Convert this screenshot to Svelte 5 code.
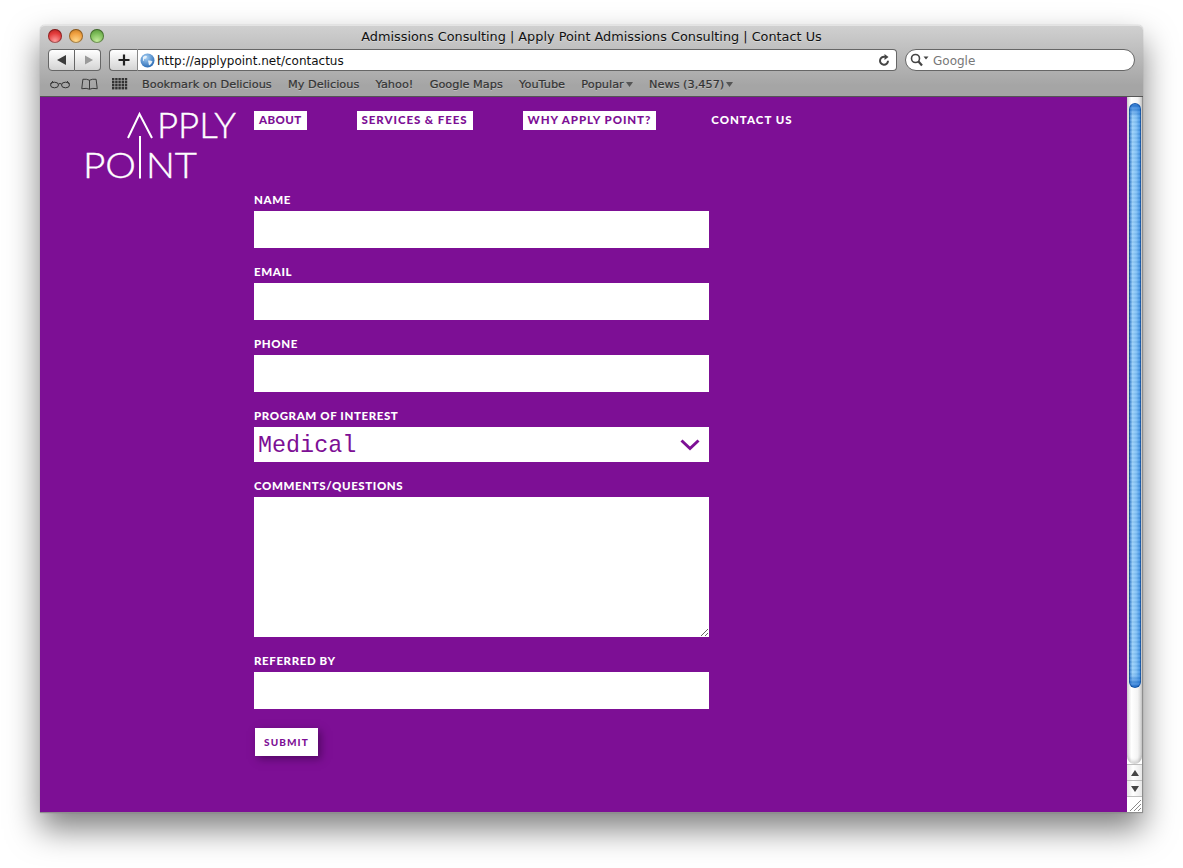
<script lang="ts">
	const bookmarks = [
		{ name: 'Bookmark on Delicious' },
		{ name: 'My Delicious' },
		{ name: 'Yahoo!' },
		{ name: 'Google Maps' },
		{ name: 'YouTube' },
		{ name: 'Popular', menu: true },
		{ name: 'News (3,457)', menu: true }
	];
	// tracking differs per item so the boxes come out the same width as the site's font
	const navItems = [
		{ name: 'ABOUT', boxed: true, tracking: 0.4 },
		{ name: 'SERVICES & FEES', boxed: true, tracking: 0.93 },
		{ name: 'WHY APPLY POINT?', boxed: true, tracking: 0.92 },
		{ name: 'CONTACT US', boxed: false, tracking: 1 }
	];
</script>

<svelte:head>
	<title>Admissions Consulting | Apply Point Admissions Consulting | Contact Us</title>
</svelte:head>

<div class="desktop">
	<div class="window">
		<header class="chrome">
			<div class="titlebar">
				<div class="lights">
					<span class="light red"></span>
					<span class="light amber"></span>
					<span class="light green"></span>
				</div>
				<div class="title">Admissions Consulting | Apply Point Admissions Consulting | Contact Us</div>
			</div>

			<div class="toolbar">
				<div class="backforward">
					<button class="tb" aria-label="Back">
						<svg width="12" height="12" viewBox="0 0 12 12"><path d="M1 6 L10 1 V11 Z" fill="#3c3c3c" /></svg>
					</button>
					<button class="tb" aria-label="Forward">
						<svg width="12" height="12" viewBox="0 0 12 12"><path d="M11 6 L3 1.5 V10.5 Z" fill="#9a9a9a" /></svg>
					</button>
				</div>
				<div class="address">
					<button class="plus" aria-label="Add bookmark">
						<svg width="12" height="12" viewBox="0 0 12 12"><path d="M6 0.5 V11.5 M0.5 6 H11.5" stroke="#222" stroke-width="2.2" /></svg>
					</button>
					<div class="urlbox">
						<svg class="globe" width="15" height="15" viewBox="0 0 15 15">
							<defs>
								<radialGradient id="g" cx="0.4" cy="0.3" r="0.8">
									<stop offset="0" stop-color="#a9d2f5" />
									<stop offset="1" stop-color="#1b5fae" />
								</radialGradient>
							</defs>
							<circle cx="7.5" cy="7.5" r="7" fill="url(#g)" />
							<path d="M3 4 Q6 2 7 3.5 Q6.5 6 4 6 Q4.5 8 3 8 Z M8 7.5 Q11 7 12.5 8.5 Q11 12 9 12.5 Q8.5 10 8 7.5 Z" fill="#e8f1f8" />
						</svg>
						<span class="url">http://applypoint.net/contactus</span>
						<svg class="reload" width="13" height="13" viewBox="0 0 13 13">
							<path d="M10 6.8 A4 4 0 1 1 7 2.9" fill="none" stroke="#444" stroke-width="2" />
							<path d="M6.5 0 L10.5 3 L6.5 6 Z" fill="#444" />
						</svg>
					</div>
				</div>
				<div class="search">
					<svg width="20" height="14" viewBox="0 0 20 14">
						<circle cx="5.5" cy="5.5" r="4" fill="none" stroke="#444" stroke-width="1.6" />
						<path d="M8.5 8.5 L12 12.5" stroke="#444" stroke-width="2.2" />
						<path d="M13.5 3.5 H18.5 L16 6.5 Z" fill="#444" />
					</svg>
					<span>Google</span>
				</div>
			</div>

			<div class="bookmarks">
				<svg class="glasses" width="20" height="10" viewBox="0 0 20 10">
					<ellipse cx="4.5" cy="6" rx="4" ry="2.8" fill="none" stroke="#333" />
					<ellipse cx="15.5" cy="6" rx="4" ry="2.8" fill="none" stroke="#333" />
					<path d="M8.5 5 Q10 4 11.5 5 M0.5 5 L3 2 M19.5 5 L17 2" fill="none" stroke="#333" />
				</svg>
				<svg class="book" width="17" height="12" viewBox="0 0 18 12">
					<path d="M9 2 Q6 0.5 2 1 L0.8 11 Q6 10 9 11.5 Q12 10 17.2 11 L16 1 Q12 0.5 9 2 V11.5" fill="none" stroke="#333" />
				</svg>
				<svg class="grid" width="16" height="12" viewBox="0 0 16 12">
					{#each [0, 3, 6, 9] as y}
						{#each [0, 3.2, 6.4, 9.6, 12.8] as x}
							<rect {x} {y} width="2.4" height="2.4" fill="#333" />
						{/each}
					{/each}
				</svg>
				<ul>
					{#each bookmarks as b}
						<li>
							{b.name}{#if b.menu}<svg width="7" height="5" viewBox="0 0 7 5"><path d="M0 0 H7 L3.5 5 Z" fill="#555" /></svg>{/if}
						</li>
					{/each}
				</ul>
			</div>
		</header>

		<div class="viewport">
			<main class="page">
				<div class="logo">
					<svg width="163" height="86" viewBox="-3 -10 163 86" aria-label="Apply Point">
						<path d="M43 27 L54.5 3 L67 27 M55 25 V67.5" fill="none" stroke="#fff" stroke-width="2" />
						<text x="72" y="27" textLength="79" lengthAdjust="spacingAndGlyphs" class="logotype">PPLY</text>
						<text x="-2" y="67" textLength="53" lengthAdjust="spacingAndGlyphs" class="logotype">PO</text>
						<text x="61" y="67" textLength="51" lengthAdjust="spacingAndGlyphs" class="logotype">NT</text>
					</svg>
				</div>

				<div class="content">
					<nav>
						{#each navItems as item}
							<a href="#top" class:boxed={item.boxed} style="letter-spacing: {item.tracking}px">{item.name}</a>
						{/each}
					</nav>

					<form>
						<div class="field">
							<label for="name">NAME</label>
							<input id="name" type="text" />
						</div>
						<div class="field">
							<label for="email">EMAIL</label>
							<input id="email" type="text" />
						</div>
						<div class="field">
							<label for="phone">PHONE</label>
							<input id="phone" type="text" />
						</div>
						<div class="field">
							<label for="program">PROGRAM OF INTEREST</label>
							<div class="select">
								<select id="program">
									<option>Medical</option>
								</select>
								<svg width="20" height="12" viewBox="0 0 20 12"><path d="M1.5 1.5 L10 9.5 L18.5 1.5" fill="none" stroke="#7d0f95" stroke-width="3" /></svg>
							</div>
						</div>
						<div class="field">
							<label for="comments">COMMENTS/QUESTIONS</label>
							<textarea id="comments"></textarea>
						</div>
						<div class="field">
							<label for="referred">REFERRED BY</label>
							<input id="referred" type="text" />
						</div>
						<button type="button" class="submit">SUBMIT</button>
					</form>
				</div>
			</main>

			<aside class="scrollbar">
				<div class="track">
					<div class="thumb"></div>
				</div>
				<div class="arrow">
					<svg width="8" height="6" viewBox="0 0 8 6"><path d="M4 0 L8 6 H0 Z" fill="#444" /></svg>
				</div>
				<div class="arrow">
					<svg width="8" height="6" viewBox="0 0 8 6"><path d="M4 6 L8 0 H0 Z" fill="#444" /></svg>
				</div>
				<div class="corner">
					<svg width="14" height="14" viewBox="0 0 14 14">
						<path d="M2 13 L13 2 M6 13 L13 6 M10 13 L13 10" stroke="#8a8a8a" stroke-width="1" />
					</svg>
				</div>
			</aside>
		</div>
	</div>
</div>

<style>
	.desktop {
		height: 868px;
		box-sizing: border-box;
		padding: 25px 40px 0;
		overflow: hidden;
		background: #fff;
	}

	.window {
		width: 1103px;
		height: 788px;
		display: flex;
		flex-direction: column;
		border-radius: 5px 5px 0 0;
		box-shadow: 0 16px 32px rgba(0, 0, 0, 0.5), 0 0 1px rgba(0, 0, 0, 0.4);
	}

	.chrome {
		height: 72px;
		box-sizing: border-box;
		background: linear-gradient(#d0d0d0, #a5a5a5 85%);
		border-top: 1px solid #e4e4e4;
		border-bottom: 1px solid #555;
		border-radius: 5px 5px 0 0;
		font-family: 'DejaVu Sans', sans-serif;
	}

	.titlebar {
		height: 23px;
		position: relative;
		display: flex;
		align-items: center;
		justify-content: center;
	}

	.lights {
		position: absolute;
		left: 8px;
		top: 3px;
		display: flex;
		gap: 7px;
	}

	.light {
		width: 14px;
		height: 14px;
		border-radius: 50%;
		box-shadow: inset 0 0 0 1px rgba(0, 0, 0, 0.35);
	}

	.red {
		background: radial-gradient(circle at 50% 85%, #ff9c9c, #e33c3c 55%, #a81818);
	}

	.amber {
		background: radial-gradient(circle at 50% 85%, #ffd98c, #f0a040 55%, #b8701a);
	}

	.green {
		background: radial-gradient(circle at 50% 85%, #c4ec9c, #7cbc58 55%, #4d8a30);
	}

	.title {
		font-size: 12.83px;
		color: #111;
		margin-top: -3px;
		text-shadow: 0 1px 0 rgba(255, 255, 255, 0.35);
	}

	.toolbar {
		height: 23px;
		padding: 0 8px;
		display: flex;
		align-items: flex-start;
	}

	.tb,
	.plus {
		padding: 0;
		height: 22px;
		display: flex;
		align-items: center;
		justify-content: center;
		background: linear-gradient(#fff, #d4d4d4);
		border: 1px solid #666;
	}

	.backforward {
		display: flex;
		width: 53px;
	}

	.tb {
		width: 27px;
		border-radius: 4px 0 0 4px;
	}

	.tb + .tb {
		border-left: 0;
		width: 26px;
		border-radius: 0 4px 4px 0;
	}

	.address {
		display: flex;
		margin-left: 8px;
	}

	.plus {
		width: 28px;
		border-radius: 4px 0 0 4px;
		border-right: 0;
	}

	.urlbox {
		width: 760px;
		height: 22px;
		box-sizing: border-box;
		display: flex;
		align-items: center;
		gap: 2px;
		background: #fff;
		border: 1px solid #666;
		border-left: 1px solid #888;
		border-radius: 0 4px 4px 0;
		padding: 0 5px 0 2px;
	}

	.url {
		flex: 1;
		padding-top: 2px;
		font-size: 12px;
		color: #111;
	}

	.search {
		width: 230px;
		height: 22px;
		box-sizing: border-box;
		margin-left: 8px;
		padding-left: 4px;
		display: flex;
		align-items: center;
		gap: 3px;
		background: #fff;
		border: 1px solid #666;
		border-radius: 11px;
		font-size: 12px;
		color: #777;
	}

	.search span {
		padding-top: 2px;
	}

	.bookmarks {
		height: 24px;
		display: flex;
		align-items: center;
		padding-left: 10px;
	}

	.glasses {
		margin-right: 11px;
	}

	.book {
		margin-right: 14px;
	}

	.bookmarks ul {
		list-style: none;
		margin: 0 0 0 14px;
		padding: 0;
		display: flex;
		gap: 16.3px;
	}

	.bookmarks li {
		font-size: 11.3px;
		color: #333;
		-webkit-text-stroke: 0.2px #333;
		text-shadow: 0 1px 0 rgba(255, 255, 255, 0.3);
		display: flex;
		align-items: center;
		gap: 2px;
	}

	.viewport {
		flex: 1;
		min-height: 0;
		display: flex;
		border: 1px solid #8e8e8e;
		border-width: 0 1px 1px 0;
	}

	.page {
		flex: 1;
		background: #7d0f95;
		display: flex;
		font-family: Lato, sans-serif;
	}

	.logo {
		width: 214px;
		box-sizing: border-box;
		padding: 4px 0 0 42px;
	}

	.logotype {
		font-family: Lato, sans-serif;
		font-weight: 300;
		font-size: 36px;
		fill: #fff;
		stroke: #fff;
		stroke-width: 0.4px;
	}

	.content {
		padding-top: 14px;
	}

	nav {
		display: flex;
		gap: 50px;
		height: 19px;
	}

	nav a {
		padding: 0 5px;
		line-height: 18px;
		font-size: 11.5px;
		font-weight: 900;
		color: #fff;
		text-decoration: none;
	}

	nav a.boxed {
		background: #fff;
		color: #7d0f95;
	}

	form {
		width: 455px;
		margin-top: 62px;
		display: flex;
		flex-direction: column;
		gap: 16px;
	}

	.field {
		display: flex;
		flex-direction: column;
	}

	label {
		height: 19px;
		line-height: 16px;
		font-size: 11.5px;
		font-weight: 900;
		letter-spacing: 0.6px;
		color: #fff;
	}

	input,
	textarea {
		display: block;
		box-sizing: border-box;
		width: 455px;
		height: 37px;
		margin: 0;
		padding: 4px;
		border: 0;
		border-radius: 0;
		background: #fff;
	}

	textarea {
		height: 140px;
		resize: both;
	}

	.select {
		position: relative;
		height: 35px;
	}

	.select svg {
		position: absolute;
		right: 9px;
		top: 12px;
		pointer-events: none;
	}

	select {
		appearance: none;
		box-sizing: border-box;
		width: 100%;
		height: 35px;
		margin: 0;
		padding: 2px 4px 0;
		border: 0;
		border-radius: 0;
		background: #fff;
		color: #7d0f95;
		font-family: 'Liberation Mono', monospace;
		font-size: 23.4px;
	}

	.submit {
		align-self: flex-start;
		width: 63px;
		height: 28px;
		margin: 3px 0 0 1px;
		padding: 0;
		border: 0;
		background: #fff;
		color: #7d0f95;
		font-family: Lato, sans-serif;
		font-size: 10px;
		font-weight: 900;
		letter-spacing: 1.1px;
		box-shadow: 3px 3px 8px rgba(50, 0, 60, 0.55);
	}

	.scrollbar {
		width: 15px;
		display: flex;
		flex-direction: column;
		background: #fff;
	}

	.track {
		flex: 1;
		padding: 6px 1px 0 2px;
		border-radius: 0 0 8px 8px;
		background: linear-gradient(90deg, #d8d8d8, #fff 30%, #f4f4f4 70%, #cfcfcf);
		box-shadow: inset 0 -3px 3px rgba(0, 0, 0, 0.15);
	}

	.thumb {
		height: 585px;
		border-radius: 6px;
		background:
			repeating-linear-gradient(rgba(255, 255, 255, 0.08) 0 2px, rgba(0, 0, 0, 0.03) 2px 4px),
			linear-gradient(#1f6fd0, rgba(31, 111, 208, 0) 14px),
			linear-gradient(0deg, #1f6fd0, rgba(31, 111, 208, 0) 14px),
			linear-gradient(90deg, #1f6cc4, #9ad0fa 30%, #7fc0f6 60%, #2f86e0);
		box-shadow: inset 0 0 0 1px rgba(10, 60, 130, 0.6);
	}

	.arrow {
		height: 15px;
		display: flex;
		align-items: center;
		justify-content: center;
		border-top: 1px solid #bdbdbd;
		background: linear-gradient(90deg, #e4e4e4, #fff 40%, #e8e8e8);
	}

	.corner {
		height: 15px;
		display: flex;
		justify-content: flex-end;
		align-items: flex-end;
		border-top: 1px solid #bdbdbd;
		background: #fff;
	}
</style>
